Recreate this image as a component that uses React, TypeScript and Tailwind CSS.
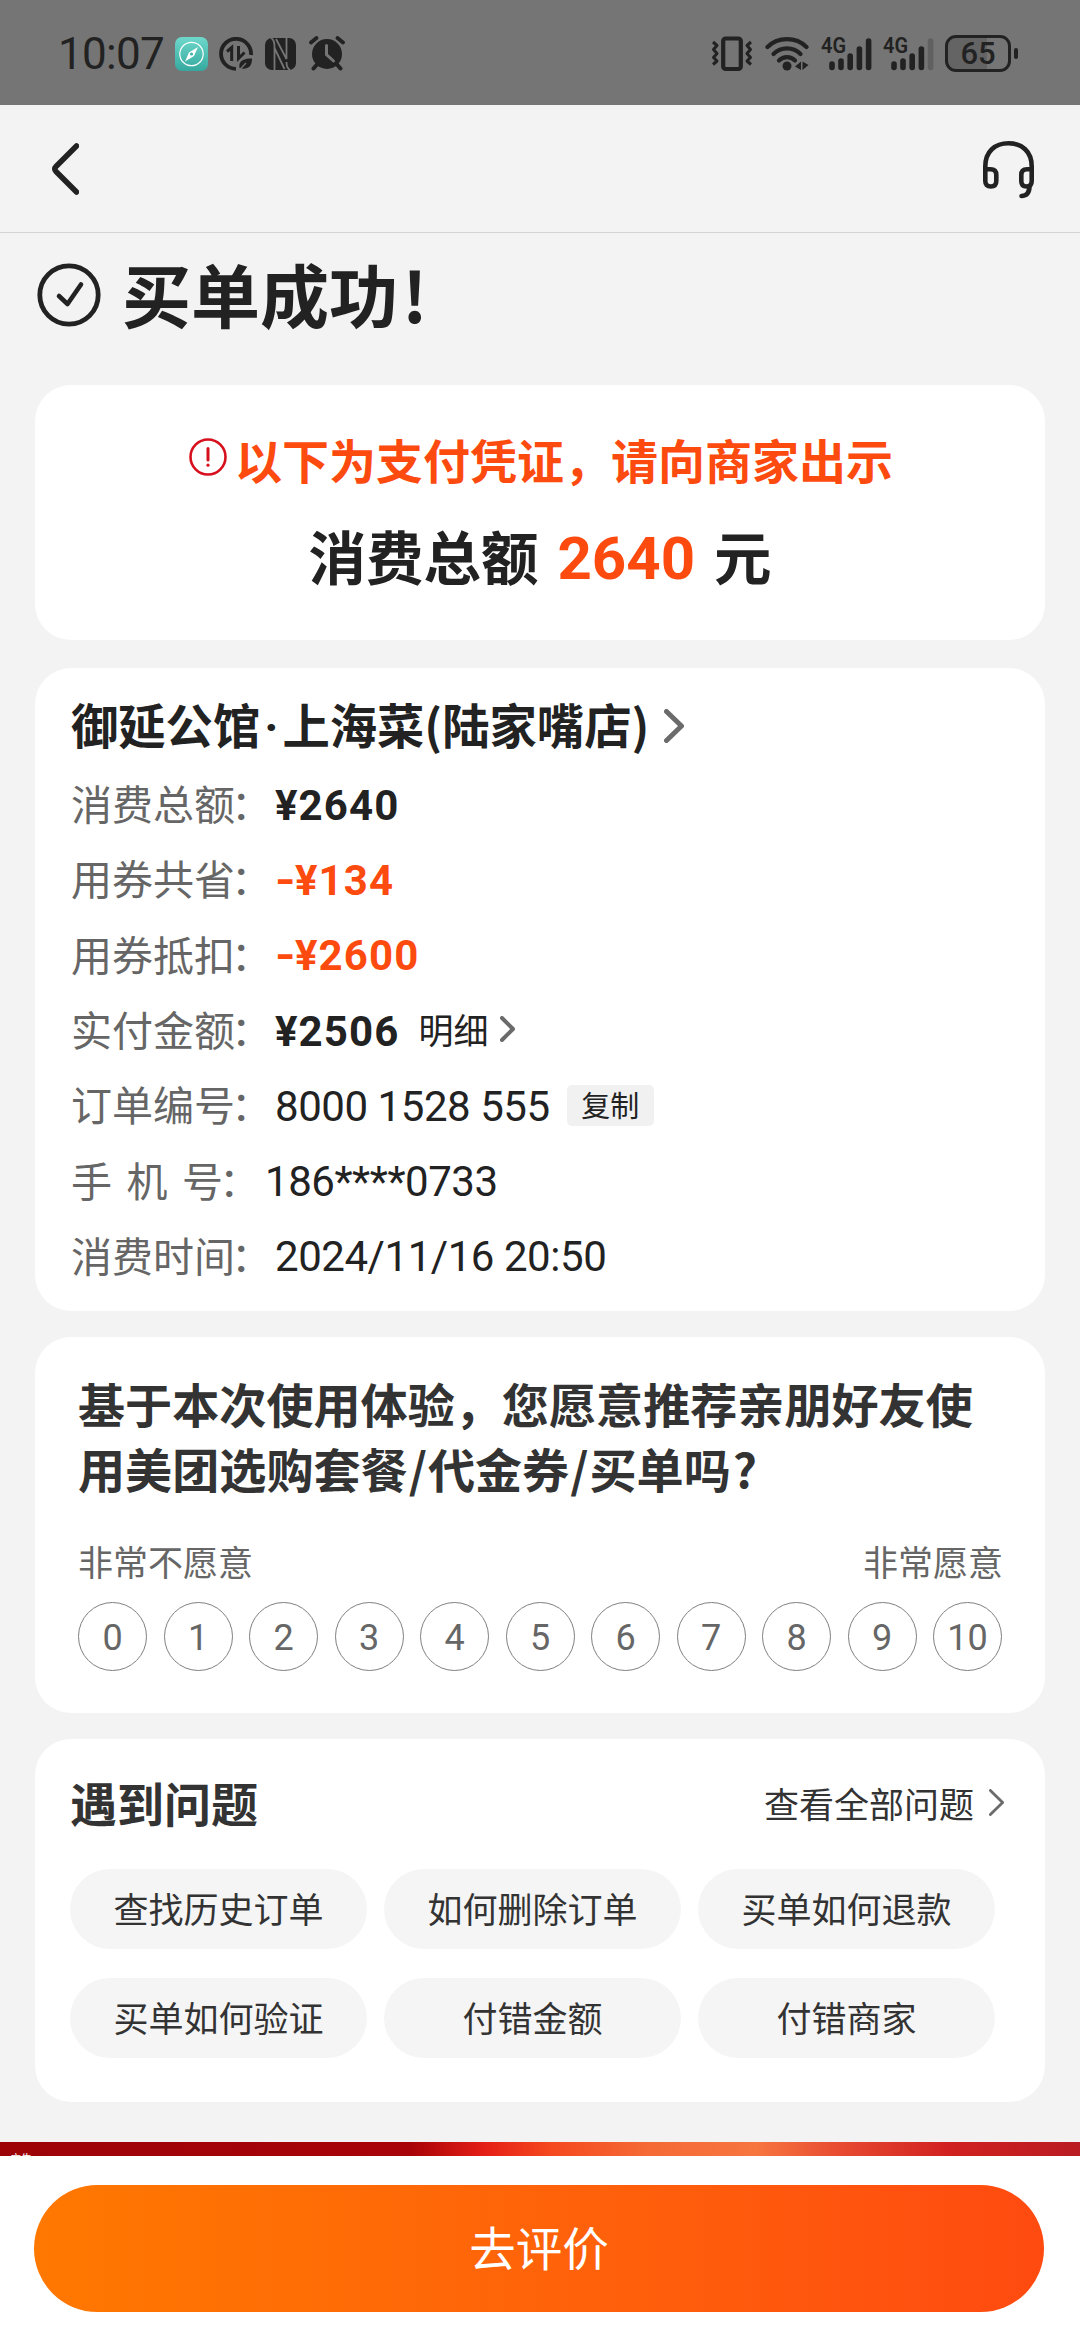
import React from "react";

const orderRows = [
  { label: "消费总额", value: "¥2640", style: "price" },
  { label: "用券共省", value: "¥134", style: "discount" },
  { label: "用券抵扣", value: "¥2600", style: "discount" },
  { label: "实付金额", value: "¥2506", style: "price", detail: true },
  { label: "订单编号", value: "8000 1528 555", style: "plain", copy: true },
  { label: "手机号", value: "186****0733", style: "plain", spaced: true },
  { label: "消费时间", value: "2024/11/16 20:50", style: "plain" },
];

const valueStyles: Record<string, string> = {
  price: "font-bold text-[#222222] tracking-[1.1px]",
  discount: "font-bold text-[#fd4b10] tracking-[1.1px]",
  plain: "text-[#222222] tracking-[-0.45px]",
};

const scores = [0, 1, 2, 3, 4, 5, 6, 7, 8, 9, 10];

const questions = ["查找历史订单", "如何删除订单", "买单如何退款", "买单如何验证", "付错金额", "付错商家"];

const Chevron = ({ w, h, stroke, color, className }: { w: number; h: number; stroke: number; color: string; className?: string }) => {
  const p = stroke / 2;
  return (
    <svg width={w} height={h} viewBox={`0 0 ${w} ${h}`} fill="none" className={className}>
      <path
        d={`M${p} ${p}L${w - p} ${h / 2}L${p} ${h - p}`}
        stroke={color}
        strokeWidth={stroke}
        strokeLinecap="round"
        strokeLinejoin="round"
      />
    </svg>
  );
};

const Signal = ({ weak }: { weak?: boolean }) => (
  <svg width="52" height="54" viewBox="0 -8 52 54" className="overflow-visible">
    <text x="0" y="18" fontSize="22" fontWeight="600" fill="#222222" textLength="25" lengthAdjust="spacingAndGlyphs" fontFamily="Roboto, sans-serif">
      4G
    </text>
    <g stroke="#222222" strokeWidth="5.6" strokeLinecap="round">
      <path d="M11 29V32.5M20 26V32.5M29.2 21V32.5M38.4 14V32.5" />
      <path d="M47.6 6V32.5" stroke={weak ? "#606060" : "#222222"} />
    </g>
  </svg>
);

const StatusBar = () => (
  <div className="flex h-[105px] items-center bg-[#757575] pt-0.5 text-[#222222]">
    <span className="ml-[58px] w-[117px] font-['Roboto',sans-serif] text-[44px] leading-none tracking-[-0.7px] whitespace-nowrap">10:07</span>

    {/* Compass app */}
    <svg width="33" height="34" viewBox="0 0 33 34">
      <defs>
        <linearGradient id="teal" x1="0" y1="0" x2="0" y2="1">
          <stop offset="0" stopColor="#6fd8cb" />
          <stop offset="1" stopColor="#35a99f" />
        </linearGradient>
      </defs>
      <rect width="33" height="34" rx="7" fill="url(#teal)" />
      <circle cx="16.5" cy="17" r="11.7" fill="none" stroke="#fff" strokeWidth="1.2" />
      <path d="M23 10L19 19L10 24.5L14 15.5Z" fill="#fff" />
      <circle cx="16.5" cy="17" r="1.6" fill="#43b5aa" />
    </svg>

    {/* Data saver */}
    <svg width="34" height="34" viewBox="0 0 34 34" className="ml-[11px]" fill="none" stroke="#222222">
      <path d="M32 18A15 15 0 1 0 17 31.8" strokeWidth="3.8" />
      <path d="M8 14.5L12.7 10.5V24M19.5 9V21.5L25.5 15.5" strokeWidth="3" />
      <path d="M20.5 31C19 23 26 21.5 33 21.5C33.5 30 27 33.5 20.5 31Z" fill="#222222" stroke="none" />
      <path d="M20 33.5L27 26" stroke="#757575" strokeWidth="1.3" />
    </svg>

    {/* NFC */}
    <svg width="32" height="32" viewBox="0 0 32 32" className="ml-3" fill="none">
      <rect width="31" height="32" rx="7" fill="#222222" />
      <path d="M6 0Q9.5 2 9.5 8V32M9.5 10L19.5 31" stroke="#757575" strokeWidth="1.8" />
      <path d="M11 1L21.5 21V0M21.5 24Q21.5 30 25 32" stroke="#757575" strokeWidth="1.8" />
    </svg>

    {/* Alarm */}
    <svg width="36" height="35" viewBox="0 0 36 35" className="ml-3" fill="none">
      <circle cx="18" cy="18" r="15" fill="#222222" />
      <path d="M2 6.5L7.5 2M34 6.5L28.5 2" stroke="#222222" strokeWidth="3.8" strokeLinecap="round" />
      <path d="M8 28.5L4.5 32.5M28 28.5L31.5 32.5" stroke="#222222" strokeWidth="4" strokeLinecap="round" />
      <path d="M17.5 9.5V18.5L24.5 25" stroke="#757575" strokeWidth="3" strokeLinecap="round" />
    </svg>

    <div className="mr-[62px] ml-auto flex items-center">
      {/* Vibrate */}
      <svg width="42" height="36" viewBox="0 0 42 36" fill="none" stroke="#222222">
        <rect x="12.2" y="2.5" width="17.6" height="30.5" rx="2.5" strokeWidth="4.2" />
        <path d="M2 6L6 9.5L2.5 13.5L6 17.5L2.5 21.5L6 25L2 28.5" strokeWidth="3" strokeLinejoin="round" />
        <path d="M40 6L36 9.5L39.5 13.5L36 17.5L39.5 21.5L36 25L40 28.5" strokeWidth="3" strokeLinejoin="round" />
      </svg>

      {/* Wifi */}
      <svg width="46" height="36" viewBox="0 0 46 36" fill="none" className="ml-3">
        <g stroke="#222222" strokeWidth="4.2" strokeLinecap="round">
          <path d="M2.5 11C13 0.5 31 0.5 41.5 11" />
          <path d="M8.5 18C16 10.5 28 10.5 35.5 18" />
          <path d="M14 24.5C18.5 20 25.5 20 30 24.5" />
        </g>
        <circle cx="22" cy="30" r="4.5" fill="#222222" />
        <path d="M30 30.5L36 25.5V34M37.5 25.5V34L43.5 29" fill="#222222" />
      </svg>

      <div className="ml-[10px]">
        <Signal />
      </div>
      <div className="ml-[10px]">
        <Signal weak />
      </div>

      <div className="ml-[10px] flex items-center">
        <div className="flex h-[37px] w-[66px] items-center justify-center rounded-[11px] border-[3px] border-[#222222] bg-linear-to-r from-[#646464] from-65% to-[#757575] to-65%">
          <span className="font-['Roboto',sans-serif] text-[31px] leading-none font-medium">65</span>
        </div>
        <div className="ml-[3px] h-[11px] w-1 rounded-sm bg-[#222222]"></div>
      </div>
    </div>
  </div>
);

const App = () => {
  return (
    <div
      lang="zh-CN"
      className="flex h-[2340px] w-[1080px] flex-col overflow-hidden bg-[#f3f3f3] font-['Noto_Sans_CJK_SC',sans-serif] text-[#222222]"
    >
      <StatusBar />

      {/* Nav */}
      <div className="flex h-32 items-center justify-between border-b border-[#d3d3d3] pr-[44px] pl-[51px]">
        <svg width="28" height="52" viewBox="0 0 28 52" fill="none">
          <path d="M25.5 3L5 23.5Q2.5 26 5 28.5L25.5 49" stroke="#222222" strokeWidth="5.5" strokeLinecap="round" />
        </svg>
        <svg width="54" height="60" viewBox="0 0 54 60" fill="none" stroke="#222222" strokeWidth="4.6" className="mt-0.5">
          <path d="M3.3 29V26.5C3.3 11.5 13 3.3 26.5 3.3S49.7 11.5 49.7 26.5V29" />
          <path d="M3.3 29.3H8.5Q14.3 29.3 14.3 35V41Q14.3 46.5 8.8 46.5T3.3 41Z" />
          <path d="M49.7 29.3H45Q39.3 29.3 39.3 35V41Q39.3 46.5 44.5 46.5T49.7 41Z" />
          <path d="M47.5 46C47.5 53 44.5 55.8 39.5 56" strokeLinecap="round" />
        </svg>
      </div>

      {/* Result */}
      <div className="mb-7 flex h-[124px] items-center pl-[37px]">
        <svg width="64" height="64" viewBox="0 0 64 64" fill="none" stroke="#222222">
          <circle cx="32" cy="32" r="29.2" strokeWidth="4.8" />
          <path d="M22 33L30.5 41L44 21.5" strokeWidth="4.6" strokeLinecap="round" strokeLinejoin="round" />
        </svg>
        <h1 className="-mt-1 ml-[21px] text-[69px] leading-none font-bold">
          买单成功<span className="ml-1">!</span>
        </h1>
      </div>

      {/* Voucher */}
      <div className="mx-[35px] h-[255px] rounded-[36px] bg-white pt-[38px]">
        <div className="flex h-[70px] items-center justify-center">
          <svg width="38" height="38" viewBox="0 0 38 38" fill="none" stroke="#d6101c" className="-mt-0.5 mr-2 ml-0.5">
            <circle cx="19" cy="19" r="17.5" strokeWidth="2.6" />
            <path d="M19 10.5V22" strokeWidth="3" strokeLinecap="round" />
            <path d="M19 27V27.2" strokeWidth="3.2" strokeLinecap="round" />
          </svg>
          <span className="text-[47px] leading-none font-bold text-[#fd4b10]">以下为支付凭证，请向商家出示</span>
        </div>
        <p className="mt-7 flex h-[70px] items-center justify-center text-[57.5px] leading-none font-bold">
          消费总额<span className="mx-[19px] pt-1.5 font-['Roboto',sans-serif] text-[60px] text-[#fd4b10]">2640</span>元
        </p>
      </div>

      {/* Order */}
      <div className="mx-[35px] mt-7 h-[643px] rounded-[36px] bg-white pt-[19px] pl-9">
        <div className="flex h-[78px] items-center">
          <h2 className="text-[47.3px] leading-none font-bold">
            御延公馆<span className="mx-[4px] font-['Roboto',sans-serif]">·</span>上海菜(陆家嘴店)
          </h2>
          <Chevron w={20} h={34} stroke={5} color="#6b6b6b" className="ml-[15px]" />
        </div>
        {orderRows.map((row) => (
          <div key={row.label} className="flex h-[75.3px] items-center text-[41px] leading-none whitespace-nowrap">
            {row.spaced ? (
              <span className="w-[194px] text-[#666666]">
                <span className="tracking-[14.5px]">手机</span>号<span className="-ml-1">：</span>
              </span>
            ) : (
              <span className="w-[204px] text-[#666666]">
                {row.label}
                <span className="-ml-1">：</span>
              </span>
            )}
            <span className={`flex pt-1.5 font-['Roboto',sans-serif] text-[42px] ${valueStyles[row.style]}`}>
              {row.style === "discount" && <span className="w-5 origin-left scale-x-125">-</span>}
              {row.value}
            </span>
            {row.detail && (
              <>
                <span className="ml-[19px] text-[35px]">明细</span>
                <Chevron w={15} h={26} stroke={4} color="#6b6b6b" className="ml-3" />
              </>
            )}
            {row.copy && (
              <button className="mt-1 ml-[17px] h-[41px] w-[87px] rounded-[5px] bg-[#f1f1f1] pb-0.5 text-[29px] leading-none">复制</button>
            )}
          </div>
        ))}
      </div>

      {/* Survey */}
      <div className="mx-[35px] mt-[26px] h-[376px] rounded-[36px] bg-white px-[43px] pt-[33px]">
        <h2 className="text-[47.1px] leading-[65px] font-bold whitespace-nowrap text-[#333333]">
          基于本次使用体验，您愿意推荐亲朋好友使
          <br />
          用美团选购套餐<span className="mx-px">/</span>代金券<span className="mx-px">/</span>买单吗<span className="ml-0.5">?</span>
        </h2>
        <div className="-mr-px mt-[39px] flex h-[42px] items-center justify-between text-[35px] leading-none text-[#666666]">
          <span>非常不愿意</span>
          <span>非常愿意</span>
        </div>
        <div className="mt-[21px] flex justify-between">
          {scores.map((n) => (
            <button
              key={n}
              className="h-[69px] w-[69px] rounded-full border border-[#808080] pt-0.5 font-['Roboto',sans-serif] text-[36px] leading-none text-[#666666]"
            >
              {n}
            </button>
          ))}
        </div>
      </div>

      {/* Help */}
      <div className="mx-[35px] mt-[26px] h-[363px] rounded-[36px] bg-white pt-[33px] pr-[41px] pl-[35px] text-[#333333]">
        <div className="flex h-[60px] items-center">
          <h2 className="-mt-0.5 text-[47px] leading-none font-bold">遇到问题</h2>
          <span className="ml-auto text-[35px] leading-none">查看全部问题</span>
          <Chevron w={15} h={27} stroke={2.8} color="#6b6b6b" className="ml-[15px]" />
        </div>
        <div className="mt-[37px] grid w-[925px] grid-cols-3 gap-x-[17px] gap-y-[29px]">
          {questions.map((q) => (
            <button key={q} className="h-20 rounded-full bg-[#f5f5f5] pb-1 text-[35px] leading-none">
              {q}
            </button>
          ))}
        </div>
      </div>

      {/* Ad banner, mostly hidden by the footer */}
      <div className="mt-10 h-[14px] overflow-hidden bg-[linear-gradient(90deg,#9c0408_0%,#a80308_38%,#e51f16_45%,#f5481f_51%,#f56a35_60%,#f7753f_70%,#e74a30_78%,#d02020_88%,#b91c22_100%)] pt-[10px] pl-[10px]">
        <p className="text-[11px] leading-[13px] text-white">广告</p>
      </div>

      {/* Footer */}
      <div className="h-[184px] bg-white px-[34px] pt-[29px] pr-9">
        <button className="h-[127px] w-full rounded-full bg-linear-to-r from-[#ff7800] to-[#ff4a10] pb-1 text-[46.5px] leading-none text-white">
          去评价
        </button>
      </div>
    </div>
  );
};

export default App;
